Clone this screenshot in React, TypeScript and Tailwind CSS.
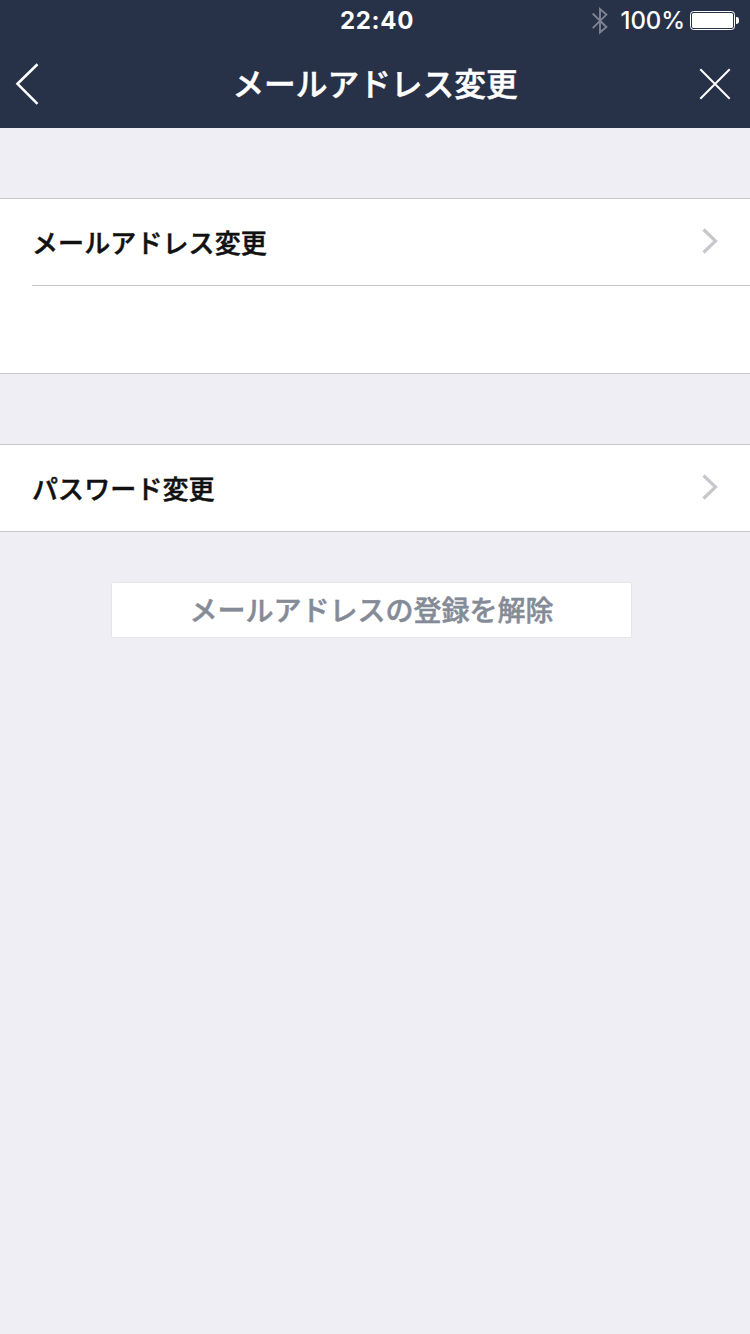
interface RowProps {
  label?: string;
  divider?: boolean;
}

const BluetoothIcon = () => (
  <svg className="mt-px" width="16" height="28" viewBox="0 0 16 28" fill="none" stroke="#7d8492" strokeWidth="1.9">
    <path d="M0.700 6.500 14.400 20 8 25.500V2.100L14.400 7.600 0.700 21.100" />
  </svg>
);

const BatteryIcon = () => (
  <svg className="mt-px" width="50" height="20" viewBox="0 0 50 20" fill="#fff">
    <rect x="0.5" y="0.5" width="44" height="18" rx="3" fill="none" stroke="#fff" />
    <rect x="2" y="2" width="41" height="15" rx="1.6" />
    <path d="M46 6h.6A2.4 2.4 0 0 1 49 8.4v2.2A2.4 2.4 0 0 1 46.600 13H46z" />
  </svg>
);

const StatusBar = () => (
  <div className="grid h-10 grid-cols-[1fr_auto_1fr] items-center font-['Inter',sans-serif] text-2xl leading-10">
    <div />
    <span className="ml-1 pt-px font-bold tracking-[0.7px]">22:40</span>
    <div className="flex items-center justify-end pr-[10px]">
      <BluetoothIcon />
      <span className="mr-[5px] ml-[13px] pt-px font-medium tracking-[-0.1px]">100%</span>
      <BatteryIcon />
    </div>
  </div>
);

const Header = () => (
  <header className="h-32 bg-[#273148] text-white">
    <StatusBar />
    <div className="flex h-[88px] items-center justify-between pr-[19px] pl-[15px]">
      <button type="button" aria-label="戻る">
        <svg width="24" height="42" viewBox="0 0 24 42" fill="none" stroke="#fff" strokeWidth="2.6">
          <path d="M22.500 1.200 2.500 20.800 22.500 40.800" />
        </svg>
      </button>
      <h1 className="pb-1 pl-3 text-[31.7px] leading-[48px] font-medium [-webkit-text-stroke:0.5px]">
        メールアドレス変更
      </h1>
      <button type="button" aria-label="閉じる">
        <svg width="32" height="32" viewBox="0 0 32 32" fill="none" stroke="#fff" strokeWidth="2">
          <path d="M1.300 1.300 30.700 30.700M30.700 1.300 1.300 30.700" />
        </svg>
      </button>
    </div>
  </header>
);

const Row = ({ label, divider }: RowProps) => (
  <div className="pl-8">
    <div
      className={
        divider
          ? "flex h-[87px] items-center justify-between border-b border-[#c8c7cc] pr-8"
          : "flex h-[86px] items-center justify-between pr-8"
      }
    >
      {label && (
        <>
          <span className="text-[26px] leading-10 font-medium tracking-[0.1px] text-[#111] [-webkit-text-stroke:0.5px]">
            {label}
          </span>
          <svg className="mb-0.5" width="16" height="26" viewBox="0 0 16 26" fill="none" stroke="#c7c7cc" strokeWidth="3.2">
            <path d="M1.500 1.500 13.500 13 1.500 24.500" />
          </svg>
        </>
      )}
    </div>
  </div>
);

const App = () => {
  return (
    <div className="min-h-screen bg-[#efeef4] font-['Noto_Sans_CJK_JP',sans-serif]">
      <Header />
      <main className="pt-[70px]">
        <section className="border-y border-[#c8c7cc] bg-white pb-px">
          <Row label="メールアドレス変更" divider />
          <Row />
        </section>
        <section className="mt-[70px] border-y border-[#c8c7cc] bg-white">
          <Row label="パスワード変更" />
        </section>
        <button
          type="button"
          className="mt-[50px] ml-[111px] flex h-14 w-[521px] items-center justify-center rounded-xs border border-[#e5e5ea] bg-white pb-0.5 text-[28px] font-medium text-[#858b96] [-webkit-text-stroke:0.5px]"
        >
          メールアドレスの登録を解除
        </button>
      </main>
    </div>
  );
};

export default App;
